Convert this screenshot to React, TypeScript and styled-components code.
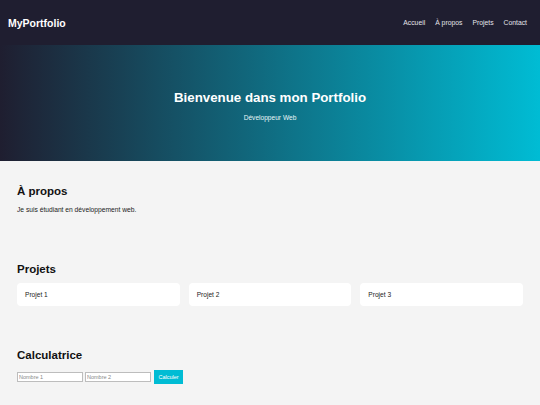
import styled, { createGlobalStyle } from "styled-components";

const GlobalStyle = createGlobalStyle`
  * {
    box-sizing: border-box;
  }

  html,
  body {
    margin: 0;
    padding: 0;
    background: #f4f4f4;
    font-family: "Liberation Sans", Arial, sans-serif;
    color: #111;
  }
`;

const navLinks = ["Accueil", "À propos", "Projets", "Contact"];
const projects = ["Projet 1", "Projet 2", "Projet 3"];

export default function App() {
  return (
    <>
      <GlobalStyle />
      <Header>
        <Logo>MyPortfolio</Logo>
        <Nav>
          {navLinks.map((link) => (
            <NavLink key={link} href="#">
              {link}
            </NavLink>
          ))}
        </Nav>
      </Header>

      <Hero>
        <HeroTitle>Bienvenue dans mon Portfolio</HeroTitle>
        <HeroSubtitle>Développeur Web</HeroSubtitle>
      </Hero>

      <Section $bottom={21}>
        <SectionTitle>À propos</SectionTitle>
        <Text>Je suis étudiant en développement web.</Text>
      </Section>

      <Section $bottom={19}>
        <SectionTitle>Projets</SectionTitle>
        <ProjectGrid>
          {projects.map((project) => (
            <ProjectCard key={project}>{project}</ProjectCard>
          ))}
        </ProjectGrid>
      </Section>

      <Section $bottom={20}>
        <SectionTitle>Calculatrice</SectionTitle>
        <CalcRow>
          <NumberInput type="number" placeholder="Nombre 1" />
          <NumberInput type="number" placeholder="Nombre 2" />
          <CalcButton>Calculer</CalcButton>
        </CalcRow>
      </Section>
    </>
  );
}

const Header = styled.header`
  display: flex;
  justify-content: space-between;
  align-items: center;

  height: 45px;
  padding: 0 13px 0 8px;

  background: #1f1e30;
`;

const Logo = styled.div`
  color: #fff;
  font-size: 10.5px;
  font-weight: 700;
`;

const Nav = styled.nav`
  display: flex;
  align-items: center;

  gap: 10px;
`;

const NavLink = styled.a`
  color: #e4e4ea;
  font-size: 6.8px;
  text-decoration: none;
`;

const Hero = styled.section`
  display: flex;
  flex-direction: column;
  justify-content: center;
  align-items: center;

  height: 116px;
  padding-top: 6px;

  background: linear-gradient(to right, #1f1e30, #00bcd4);
  color: #fff;
`;

const HeroTitle = styled.h1`
  margin: 0 0 9px;

  font-size: 13.3px;
  font-weight: 700;
  line-height: 14px;
`;

const HeroSubtitle = styled.p`
  margin: 0;

  font-size: 6.6px;
  line-height: 8px;
  color: #e8f6f8;
`;

const Section = styled.section<{ $bottom: number }>`
  padding: 23px 17px ${(p) => p.$bottom}px;
`;

const SectionTitle = styled.h2`
  margin: 0 0 7px;

  font-size: 11.5px;
  font-weight: 700;
  line-height: 14px;
  color: #111;
`;

const Text = styled.p`
  margin: 0 0 4px;

  font-size: 6.7px;
  line-height: 9px;
  color: #222;
`;

const ProjectGrid = styled.div`
  display: grid;
  grid-template-columns: repeat(3, 1fr);

  gap: 9px;
`;

const ProjectCard = styled.div`
  display: flex;
  align-items: center;

  height: 23px;
  padding: 0 8px;

  background: #fff;
  border-radius: 4px;

  font-size: 6.6px;
  color: #222;
`;

const CalcRow = styled.div`
  display: flex;
  align-items: center;

  padding-top: 1px;
  gap: 2px;
`;

const NumberInput = styled.input`
  width: 66px;
  height: 10px;
  padding: 0 1px;

  background: #fff;
  border: 1px solid #bdbdbd;

  font-family: "Liberation Sans", Arial, sans-serif;
  font-size: 5.5px;

  &::placeholder {
    color: #888;
  }

  &::-webkit-outer-spin-button,
  &::-webkit-inner-spin-button {
    -webkit-appearance: none;
    margin: 0;
  }
`;

const CalcButton = styled.button`
  width: 29px;
  height: 14px;
  margin-left: 1px;
  padding: 0;

  background: #00bcd4;
  border: none;

  color: #fff;
  font-family: "Liberation Sans", Arial, sans-serif;
  font-size: 5.5px;
`;
